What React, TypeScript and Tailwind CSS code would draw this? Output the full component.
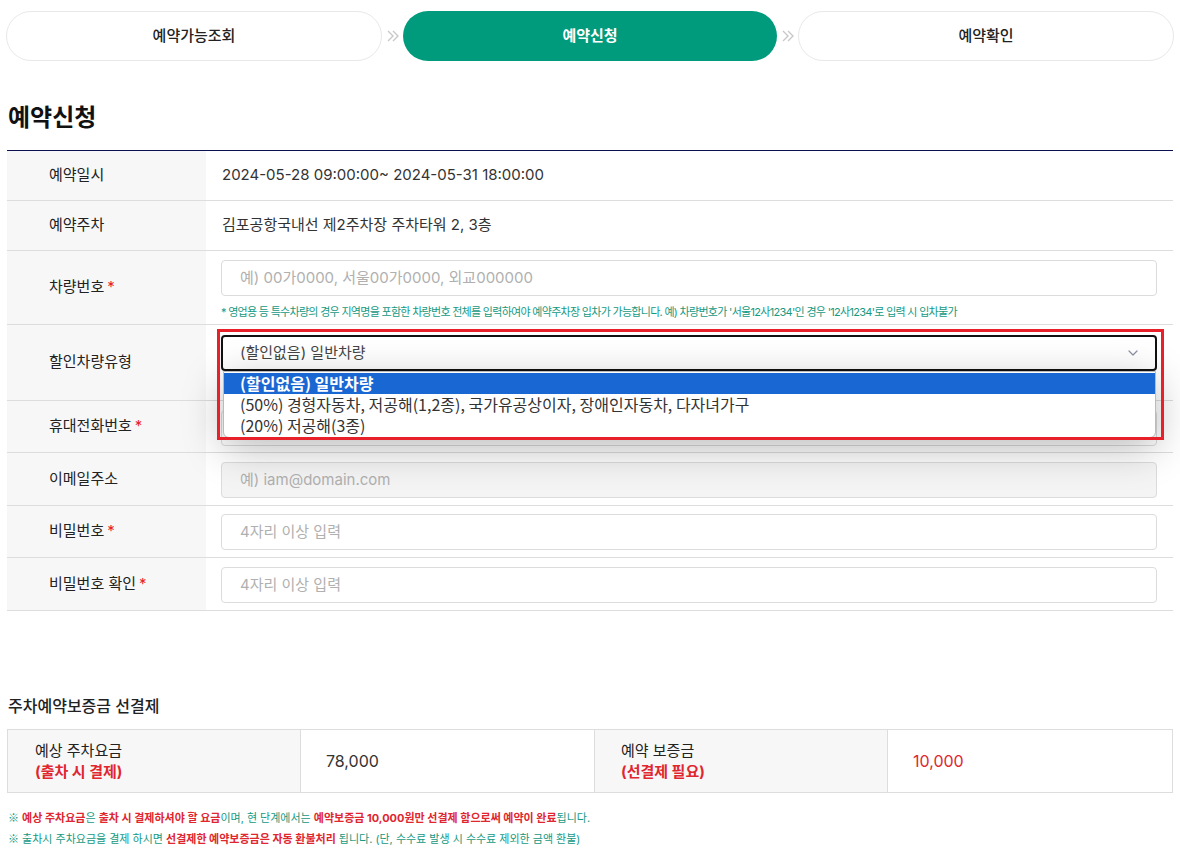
import { Fragment } from 'react';
import { ChevronDown } from 'lucide-react';

const steps = [
  { label: '예약가능조회', active: false },
  { label: '예약신청', active: true },
  { label: '예약확인', active: false },
];

const discountOptions = [
  '(할인없음) 일반차량',
  '(50%) 경형자동차, 저공해(1,2종), 국가유공상이자, 장애인자동차, 다자녀가구',
  '(20%) 저공해(3종)',
];

const FONT = "font-['Inter','Noto_Sans_CJK_KR',sans-serif]";

const Required = () => <span className="ml-[3px] text-[#e8202a]">*</span>;

// one row of the form table: grey label cell + content cell
const Row = ({
  label,
  required,
  height,
  children,
}: {
  label: string;
  required?: boolean;
  height: string;
  children: React.ReactNode;
}) => (
  <div className={`flex border-b border-[#ddd] ${height}`}>
    <div className="flex w-[199px] shrink-0 items-center bg-[#f7f7f7] pl-[42px] text-[15px] text-[#222]">
      {label}
      {required && <Required />}
    </div>
    <div className="min-w-0 flex-1 pl-[15px] pr-[16px]">{children}</div>
  </div>
);

const TextInput = ({ placeholder, shaded }: { placeholder: string; shaded?: boolean }) => (
  <div
    className={`flex h-[36px] items-center rounded-[4px] border border-[#dcdcdc] px-[18px] text-[15px] text-[#b0b0b0] ${
      shaded ? 'bg-[#f4f4f4]' : 'bg-white'
    }`}
  >
    {placeholder}
  </div>
);

const Arrow = () => (
  <div className="flex w-[21px] shrink-0 justify-center">
    <svg width="14" height="14" viewBox="0 0 14 14">
      <path d="M2 2l5 5-5 5M7 2l5 5-5 5" fill="none" stroke="#c8c8c8" strokeWidth="1.4" />
    </svg>
  </div>
);

const StepBar = () => (
  <div className="flex items-center px-[6px] pt-[11px]">
    {steps.map((step, i) => (
      <Fragment key={step.label}>
        {i > 0 && <Arrow />}
        <div
          className={`flex h-[50px] min-w-0 flex-1 items-center justify-center rounded-full text-[15px] ${
            step.active ? 'bg-[#009b7c] font-semibold text-white' : 'border border-[#e8e8e8] bg-white font-medium text-[#222]'
          }`}
        >
          {step.label}
        </div>
      </Fragment>
    ))}
  </div>
);

const DiscountSelect = () => (
  <div className="relative pt-[10px]">
    <div className="flex h-[36px] items-center justify-between rounded-[4px] border-2 border-[#111] bg-white pl-[17px] pr-[14px] text-[15px] text-[#444]">
      <span>(할인없음) 일반차량</span>
      <ChevronDown className="h-4 w-4 text-[#8a8fa3]" strokeWidth={1.8} />
    </div>
    {/* open option list */}
    <div className="absolute left-[2px] right-[1px] top-[46px] z-20 rounded-b-[6px] border border-[#bbb] bg-white py-[1px] font-['Noto_Sans_CJK_KR',sans-serif] text-[16px] leading-[21px] text-[#333] shadow-[0_10px_40px_rgba(0,0,0,0.28)]">
      {discountOptions.map((opt, i) => (
        <div
          key={opt}
          className={`whitespace-nowrap pl-[16px] ${i === 0 ? 'bg-[#1967d2] font-bold text-white' : ''}`}
        >
          {opt}
        </div>
      ))}
    </div>
    {/* highlight frame */}
    <div className="pointer-events-none absolute -left-[4px] -right-[7px] top-[4px] z-30 h-[111px] border-[3px] border-[#e8202a]" />
  </div>
);

export default function App() {
  return (
    <div className={`min-h-[859px] bg-white ${FONT} text-[#222]`}>
      <StepBar />

      <div className="px-[7px]">
        <h2 className="mt-[40px] pl-[1px] text-[24px] font-semibold leading-[34px] text-[#111]">예약신청</h2>

        <div className="mt-[15px] border-t border-[#0b1150]">
          <Row label="예약일시" height="h-[50px]">
            <div className="flex h-full items-center pl-[1px] text-[15px] text-[#333]">
              2024-05-28 09:00:00~ 2024-05-31 18:00:00
            </div>
          </Row>

          <Row label="예약주차" height="h-[50px]">
            <div className="flex h-full items-center pl-[1px] text-[15px] text-[#333]">
              김포공항국내선 제2주차장 주차타워 2, 3층
            </div>
          </Row>

          <Row label="차량번호" required height="h-[74px]">
            <div className="pt-[9px]">
              <TextInput placeholder="예) 00가0000, 서울00가0000, 외교000000" />
              <p className="mt-[8px] whitespace-nowrap text-[11px] tracking-[-0.7px] text-[#15997f]">
                * 영업용 등 특수차량의 경우 지역명을 포함한 차량번호 전체를 입력하여야 예약주차장 입차가 가능합니다. 예) 차량번호가 '서울12사1234'인 경우 '12사1234'로 입력 시 입차불가
              </p>
            </div>
          </Row>

          <Row label="할인차량유형" height="h-[76px]">
            <DiscountSelect />
          </Row>

          <Row label="휴대전화번호" required height="h-[52px]">
            <div className="pt-[9px]">
              <TextInput placeholder="" />
            </div>
          </Row>

          <Row label="이메일주소" height="h-[53px]">
            <div className="pt-[9px]">
              <TextInput placeholder="예) iam@domain.com" shaded />
            </div>
          </Row>

          <Row label="비밀번호" required height="h-[52px]">
            <div className="pt-[8px]">
              <TextInput placeholder="4자리 이상 입력" />
            </div>
          </Row>

          <Row label="비밀번호 확인" required height="h-[53px]">
            <div className="pt-[9px]">
              <TextInput placeholder="4자리 이상 입력" />
            </div>
          </Row>
        </div>

        <h3 className="mt-[84px] pl-[1px] text-[16px] font-medium leading-[22px] text-[#222]">주차예약보증금 선결제</h3>

        <div className="mt-[12px] grid grid-cols-[292px_294px_293px_1fr] border border-[#ddd]">
          <div className="flex h-[62px] flex-col justify-center bg-[#f7f7f7] pl-[27px] text-[15px] leading-[21px]">
            <span className="text-[#222]">예상 주차요금</span>
            <span className="font-bold text-[#e0262f]">(출차 시 결제)</span>
          </div>
          <div className="flex items-center border-l border-[#ddd] pl-[25px] text-[16px] text-[#333]">78,000</div>
          <div className="flex flex-col justify-center border-l border-[#ddd] bg-[#f7f7f7] pl-[26px] text-[15px] leading-[21px]">
            <span className="text-[#222]">예약 보증금</span>
            <span className="font-bold text-[#e0262f]">(선결제 필요)</span>
          </div>
          <div className="flex items-center border-l border-[#ddd] pl-[25px] text-[16px] text-[#e0262f]">10,000</div>
        </div>

        <div className="mt-[14px] pl-[1px] text-[11px] leading-[20px] text-[#15997f]">
          <p>
            <span className="font-['Noto_Sans_CJK_KR']">※</span> <b className="text-[#e0262f]">예상 주차요금</b>은{' '}
            <b className="text-[#e0262f]">출차 시 결제하셔야 할 요금</b>이며, 현 단계에서는{' '}
            <b className="text-[#e0262f]">예약보증금 10,000원만 선결제 함으로써 예약이 완료</b>됩니다.
          </p>
          <p>
            <span className="font-['Noto_Sans_CJK_KR']">※</span> 출차시 주차요금을 결제 하시면{' '}
            <b className="text-[#e0262f]">선결제한 예약보증금은 자동 환불처리</b> 됩니다. (단, 수수료 발생 시 수수료 제외한 금액 환불)
          </p>
        </div>
      </div>
    </div>
  );
}
